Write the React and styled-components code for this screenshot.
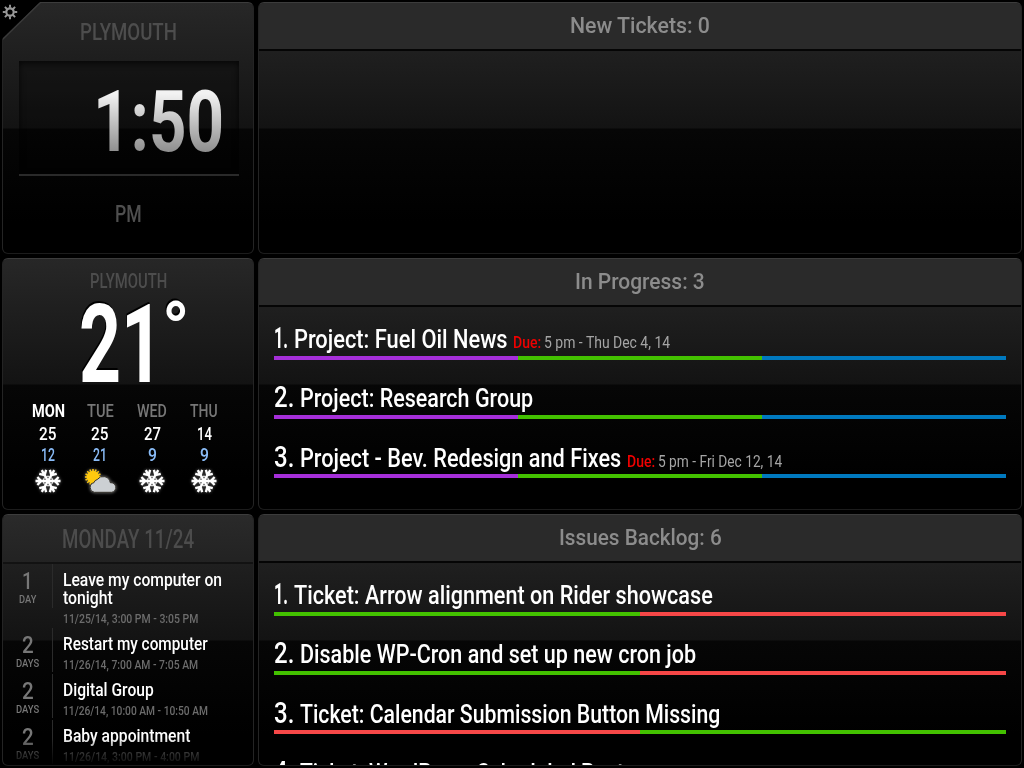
import React, { useLayoutEffect, useRef, useState } from "react";
import styled, { createGlobalStyle } from "styled-components";

const GlobalStyle = createGlobalStyle`
  * { box-sizing: border-box; }
  html, body { margin: 0; background: #000; overflow: hidden; }
  body { font-family: Roboto, "Liberation Sans", sans-serif; color: #fff; }
`;

const FitBox = styled.span`
  display: block;
  flex: none;
  width: ${(p) => p.$width}px;
  height: ${(p) => p.$line || p.$size}px;
  line-height: ${(p) => p.$line || p.$size}px;
  font-size: ${(p) => p.$size}px;
  font-weight: ${(p) => p.$weight || 500};
  color: ${(p) => p.$color || "inherit"};
  white-space: nowrap;
`;

const FitInner = styled.span`
  display: inline-block;
  transform-origin: 0 50%;
`;

/* Condenses a line of text horizontally to a given width. */
function Fit({ width, size, line, weight, color, children, className }) {
  const ref = useRef(null);
  const [scale, setScale] = useState(1);
  useLayoutEffect(() => {
    setScale(width / ref.current.offsetWidth);
  }, [width, size, children]);
  return (
    <FitBox className={className} $width={width} $size={size} $line={line} $weight={weight} $color={color}>
      <FitInner ref={ref} style={{ transform: `scaleX(${scale})` }}>{children}</FitInner>
    </FitBox>
  );
}

const Board = styled.main`
  width: 1024px;
  height: 768px;
  padding: 2px;
  display: grid;
  grid-template-columns: 252px 764px;
  grid-template-rows: repeat(3, 252px);
  gap: 4px;
  background: #000;
  overflow: hidden;
`;

const Panel = styled.section`
  position: relative;
  display: flex;
  flex-direction: column;
  overflow: hidden;
  border-radius: 6px;
  border: 1px solid;
  border-color: #3c3c3c #242424 #1c1c1c;
  background: linear-gradient(#272727 0, #131313 125px, #060606 126px, #000 220px);
`;

const ClockPanel = styled(Panel)`
  align-items: center;
  padding-top: 16px;
  clip-path: polygon(38px 0, 100% 0, 100% 100%, 0 100%, 0 37px);
`;

const CornerEdge = styled.svg`
  position: absolute;
  left: -1px;
  top: -1px;
`;

const ClockCell = styled.div`
  position: relative;
  display: grid;
`;

const Gear = styled.svg`
  position: absolute;
  left: 0;
  top: 2px;
`;

const Face = styled.div`
  width: 220px;
  height: 115px;
  margin: 16px 0 25px 1px;
  padding: 17px 0 0 74px;
  border-bottom: 2px solid #2a2a2a;
  background: rgba(0, 0, 0, 0.28);
  box-shadow: inset 0 2px 6px rgba(0, 0, 0, 0.75);
`;

const Time = styled(Fit)`
  & > span {
    background: linear-gradient(#f2f2f2 18%, #888 88%);
    background-clip: text;
    -webkit-background-clip: text;
    color: transparent;
  }
`;

const WeatherPanel = styled(Panel)`
  align-items: center;
  padding-top: 12px;
`;

const Current = styled.div`
  display: flex;
  width: 112px;
  height: 86px;
  margin: 9px 0 0 14px;
  text-shadow: -1px -2px 0 #000;
`;

const Degree = styled(Fit)`
  margin: -8px 0 0 -1px;
`;

const Days = styled.div`
  display: grid;
  grid-template-columns: repeat(4, 52px);
  margin: 10px 0 0 -4px;
`;

const Day = styled.div`
  display: flex;
  flex-direction: column;
  align-items: center;
`;

const IconSlot = styled.svg`
  margin-top: 3px;
  overflow: visible;
  filter: drop-shadow(0 0 1.5px rgba(255, 255, 255, 0.45));
`;

const CalHead = styled.header`
  display: flex;
  flex: none;
  justify-content: center;
  height: 49px;
  padding-top: 12px;
  border-bottom: 2px solid #121212;
  background: rgba(255, 255, 255, 0.015);
`;

const Agenda = styled.div`
  overflow: hidden;
  flex: 1;
  mask-image: linear-gradient(#000 174px, transparent 203px);
`;

const Event = styled.article`
  display: grid;
  grid-template-columns: 50px 1fr;
  height: ${(p) => (p.$tall ? 64 : 46)}px;
`;

const Count = styled.div`
  display: flex;
  flex-direction: column;
  align-items: center;
  height: 44px;
  padding-top: 5px;
  border-right: 1px solid #2b2b2b;
  color: #777;
`;

const Details = styled.div`
  padding: 7px 0 0 9.5px;
`;

const ListHead = styled.header`
  display: flex;
  flex: none;
  justify-content: center;
  height: 48px;
  padding-top: 9px;
  background: #2a2a2a;
  border-bottom: 2px solid #050505;
`;

const List = styled.div`
  flex: 1;
  overflow: hidden;
  padding: 13px 15px 0;
`;

const Item = styled.article`
  height: 59.25px;
`;

const Line = styled.div`
  display: flex;
  align-items: baseline;
  height: 35.5px;
`;

const Bar = styled.div`
  display: flex;
  height: 4px;
`;

const Segment = styled.i`
  flex: 1;
  background: ${(p) => p.$color};
`;

const Gap = styled.span`
  flex: none;
  width: ${(p) => p.$w}px;
`;

function Snow() {
  return (
    <IconSlot width="26" height="26" viewBox="-13 -13 26 26">
      <g fill="none" stroke="#fff" strokeWidth="2.3">
        {[30, 90, 150, 210, 270, 330].map((a) => (
          <path key={a} transform={`rotate(${a})`} d="M0 0V-12.5M-4-10.6 0-6.8 4-10.6" />
        ))}
        <path d="M0-5 4.3-2.5V2.5L0 5-4.3 2.5V-2.5z" strokeWidth="1" />
      </g>
    </IconSlot>
  );
}

function PartlyCloudy() {
  const rays = Array.from({ length: 16 }, (_, i) => i * 22.5);
  return (
    <IconSlot width="32" height="26" viewBox="0 0 32 26">
      <circle cx="9" cy="9" r="6.3" fill="#ffc90e" />
      <g stroke="#ffc90e" strokeWidth="1.6">
        {rays.map((a) => <path key={a} d="M9 3V.9" transform={`rotate(${a} 9 9)`} />)}
      </g>
      <path d="M10.3 24.3a4.9 4.9 0 0 1-.4-9.6 4.6 4.6 0 0 1 3.4-3.2 7.2 7.2 0 0 1 13 3.2 4.8 4.8 0 0 1 1.4 9.6z" fill="#ccd0d3" stroke="#33302a" strokeWidth="1" />
    </IconSlot>
  );
}

const forecast = [
  { day: "MON", w: 33, hi: "25", hw: 17.5, lo: "12", lw: 14, color: "#fff", weight: 700, Icon: Snow },
  { day: "TUE", w: 27, hi: "25", hw: 17.5, lo: "21", lw: 14, color: "#777", Icon: PartlyCloudy },
  { day: "WED", w: 30, hi: "27", hw: 17, lo: "9", lw: 9, color: "#777", Icon: Snow },
  { day: "THU", w: 28, hi: "14", hw: 15, lo: "9", lw: 9, color: "#777", Icon: Snow },
];

const events = [
  { n: "1", nw: 11, unit: "DAY", uw: 17, lines: [["Leave my computer on", 159], ["tonight", 50]], when: "11/25/14, 3:00 PM - 3:05 PM", ww: 135 },
  { n: "2", nw: 12, unit: "DAYS", uw: 23, lines: [["Restart my computer", 145]], when: "11/26/14, 7:00 AM - 7:05 AM", ww: 135 },
  { n: "2", nw: 12, unit: "DAYS", uw: 23, lines: [["Digital Group", 91]], when: "11/26/14, 10:00 AM - 10:50 AM", ww: 145 },
  { n: "2", nw: 12, unit: "DAYS", uw: 23, lines: [["Baby appointment", 127]], when: "11/26/14, 3:00 PM - 4:00 PM", ww: 136 },
];

const P = "#a52fd9", G = "#43c100", B = "#0079bf", R = "#f64747";
const lists = [
  { title: "New Tickets: 0", tw: 140, items: [] },
  {
    title: "In Progress: 3", tw: 129.5,
    items: [
      { n: "1.", nw: 14, text: "Project: Fuel Oil News", w: 214, due: "5 pm - Thu Dec 4, 14", dw: 126, bar: [P, G, B] },
      { n: "2.", nw: 20, text: "Project: Research Group", w: 233, bar: [P, G, B] },
      { n: "3.", nw: 20, text: "Project - Bev. Redesign and Fixes", w: 321.5, due: "5 pm - Fri Dec 12, 14", dw: 124, bar: [P, G, B] },
    ],
  },
  {
    title: "Issues Backlog: 6", tw: 163,
    items: [
      { n: "1.", nw: 14, text: "Ticket: Arrow alignment on Rider showcase", w: 419, bar: [G, R] },
      { n: "2.", nw: 20, text: "Disable WP-Cron and set up new cron job", w: 396, bar: [G, R] },
      { n: "3.", nw: 20, text: "Ticket: Calendar Submission Button Missing", w: 420, bar: [R, G] },
      { n: "4.", nw: 20, text: "Ticket: WordPress Scheduled Posts", w: 335, bar: [G, R] },
    ],
  },
];

function TicketList({ list }) {
  return (
    <Panel>
      <ListHead><Fit width={list.tw} size={22.5} line={26} color="#8c8c8c">{list.title}</Fit></ListHead>
      <List>
        {list.items.map((it) => (
          <Item key={it.n}>
            <Line>
              <Fit width={it.nw} size={30} line={36} weight={it.n === "1." ? 700 : 500}>{it.n}</Fit>
              <Gap $w={it.n === "1." ? 5.5 : 6} />
              <Fit width={it.w} size={25.5} line={36}>{it.text}</Fit>
              {it.due && (
                <>
                  <Gap $w={5} />
                  <Fit width={28} size={16.5} line={30} color="#f00000">Due:</Fit>
                  <Gap $w={3.5} />
                  <Fit width={it.dw} size={16.5} line={30} weight={400} color="#a5a5a5">{it.due}</Fit>
                </>
              )}
            </Line>
            <Bar>{it.bar.map((c) => <Segment key={c} $color={c} />)}</Bar>
          </Item>
        ))}
      </List>
    </Panel>
  );
}

function Clock() {
  return (
    <ClockCell>
      <ClockPanel>
        <CornerEdge width="42" height="42"><path d="M0 37.5 38.5 0" stroke="#3a3a3a" strokeWidth="2" /></CornerEdge>
        <Fit width={97} size={24} line={26} weight={500} color="#4d4d4d">PLYMOUTH</Fit>
        <Face><Time width={131} size={85} line={88} weight={700}>1:50</Time></Face>
        <Fit width={27} size={23.5} line={26} weight={500} color="#4f4f4f">PM</Fit>
      </ClockPanel>
      <Gear width="16" height="16" viewBox="-8 -8 16 16">
        <circle r="3.7" fill="none" stroke="#999" strokeWidth="2.2" />
        {[0, 45, 90, 135, 180, 225, 270, 315].map((a) => (
          <path key={a} d="M0-4.3V-7.2" stroke="#999" strokeWidth="1.9" transform={`rotate(${a})`} />
        ))}
      </Gear>
    </ClockCell>
  );
}

function Weather() {
  return (
    <WeatherPanel>
      <Fit width={77} size={19.3} line={22} weight={500} color="#4d4d4d">PLYMOUTH</Fit>
      <Current>
        <Fit width={84} size={110} line={86} weight={700}>21</Fit>
        <Degree width={28} size={76} line={72} weight={700}>°</Degree>
      </Current>
      <Days>
        {forecast.map(({ day, w, hi, hw, lo, lw, color, weight, Icon }) => (
          <Day key={day}>
            <Fit width={w} size={19} line={25} weight={weight || 500} color={color}>{day}</Fit>
            <Fit width={hw} size={17.5} line={23}>{hi}</Fit>
            <Fit width={lw} size={17.5} line={19} color="#8abcf8">{lo}</Fit>
            <Icon />
          </Day>
        ))}
      </Days>
    </WeatherPanel>
  );
}

function Calendar() {
  return (
    <Panel>
      <CalHead><Fit width={132} size={25} line={26} color="#4c4c4c">MONDAY 11/24</Fit></CalHead>
      <Agenda>
        {events.map((e) => (
          <Event key={e.when} $tall={e.lines.length > 1}>
            <Count>
              <Fit width={e.nw} size={24} line={24} weight={500}>{e.n}</Fit>
              <Fit width={e.uw} size={11.5} line={12} weight={500}>{e.unit}</Fit>
            </Count>
            <Details>
              {e.lines.map(([t, w]) => <Fit key={t} width={w} size={18} line={18}>{t}</Fit>)}
              <Fit width={e.ww} size={13} line={23} weight={500} color="#6c6c6c">{e.when}</Fit>
            </Details>
          </Event>
        ))}
      </Agenda>
    </Panel>
  );
}

export default function App() {
  return (
    <>
      <GlobalStyle />
      <Board>
        <Clock />
        <TicketList list={lists[0]} />
        <Weather />
        <TicketList list={lists[1]} />
        <Calendar />
        <TicketList list={lists[2]} />
      </Board>
    </>
  );
}
